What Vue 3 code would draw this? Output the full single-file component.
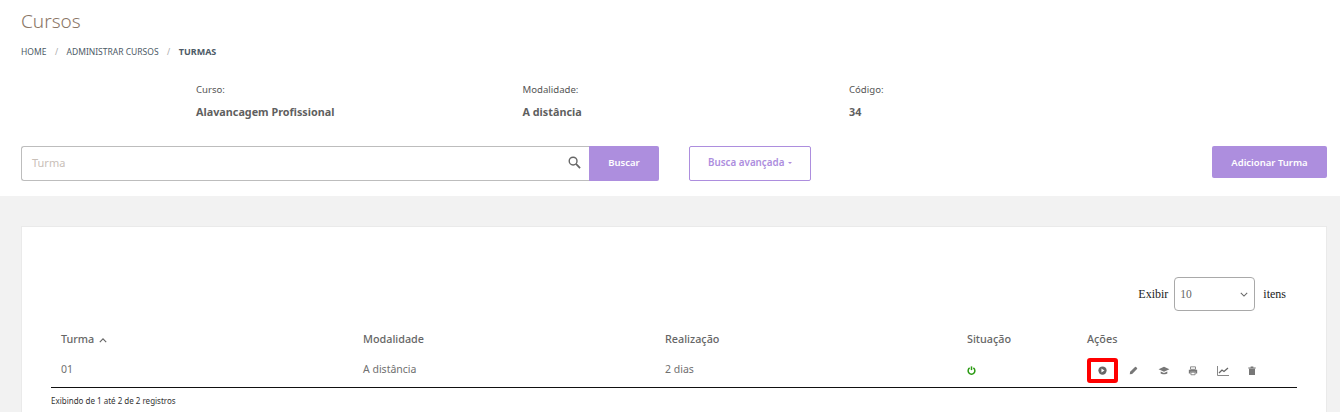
<script setup>
const infos = [
  { label: 'Curso:', value: 'Alavancagem Profissional' },
  { label: 'Modalidade:', value: 'A distância' },
  { label: 'Código:', value: '34' }
]
</script>

<template>
  <div class="page">
    <header class="top">
      <h1 class="title">Cursos</h1>
      <nav class="crumbs">
        <span>HOME</span><i>/</i><span>ADMINISTRAR CURSOS</span><i>/</i><b>TURMAS</b>
      </nav>
      <div class="infos">
        <div v-for="info in infos" :key="info.label" class="info">
          <div class="label">{{ info.label }}</div>
          <div class="value">{{ info.value }}</div>
        </div>
      </div>
      <div class="toolbar">
        <div class="search">
          <span class="placeholder">Turma</span>
          <svg class="lens" viewBox="0 0 14 14" width="13" height="13"><circle cx="5.5" cy="5.5" r="4.2" fill="none" stroke="#666" stroke-width="1.5"/><path d="M8.6 8.6 13 13" stroke="#666" stroke-width="1.9" fill="none"/></svg>
        </div>
        <button class="btn solid search-btn">Buscar</button>
        <button class="btn outline">Busca avançada <span class="caret"></span></button>
        <button class="btn solid add">Adicionar Turma</button>
      </div>
    </header>

    <main class="body">
      <section class="card">
        <div class="show">
          <span>Exibir</span>
          <div class="select"><span>10</span>
            <svg viewBox="0 0 10 6" width="8" height="5"><path d="M1 1l4 4 4-4" fill="none" stroke="#666" stroke-width="1.3"/></svg>
          </div>
          <span>itens</span>
        </div>
        <div class="table">
          <div class="row head">
            <div>Turma <svg class="sort" viewBox="0 0 10 6" width="8" height="5"><path d="M1 5l4-4 4 4" fill="none" stroke="#666" stroke-width="1.4"/></svg></div>
            <div>Modalidade</div>
            <div>Realização</div>
            <div>Situação</div>
            <div>Ações</div>
          </div>
          <div class="row data">
            <div class="txt">01</div>
            <div class="txt">A distância</div>
            <div class="txt">2 dias</div>
            <div>
              <svg class="power" viewBox="0 0 12 12" width="9" height="9"><path d="M3.5 2.6a4.5 4.5 0 1 0 5 0" fill="none" stroke="#2a9a12" stroke-width="2"/><path d="M6 .5v5" stroke="#2a9a12" stroke-width="2"/></svg>
            </div>
            <div class="actions">
              <span class="act play">
                <svg viewBox="0 0 12 12" width="9" height="9"><circle cx="6" cy="6" r="5.5" fill="#666"/><path d="M4.600 3.400 8.600 6l-4 2.600z" fill="#fff"/></svg>
              </span>
              <span class="act pencil">
                <svg viewBox="0 0 12 12" width="9" height="9"><path d="M1 11l.5-3.200L8 1.300a1 1 0 0 1 1.400 0l1.300 1.300a1 1 0 0 1 0 1.400L4.200 10.500z" fill="#777"/></svg>
              </span>
              <span class="act grad">
                <svg viewBox="0 0 14 12" width="12" height="10"><path d="M7 1 .5 4 7 7l6.500-3z" fill="#777"/><path d="M3 6.500v2.600C4 10.300 10 10.300 11 9.100V6.500L7 8.400z" fill="#777"/></svg>
              </span>
              <span class="act printer">
                <svg viewBox="0 0 12 12" width="10" height="10"><path d="M3 1h6v3H3z" fill="none" stroke="#777"/><path d="M1 4.500h10v4.500H9V7H3v2H1z" fill="#777"/><path d="M3.500 7.500h5v3h-5z" fill="none" stroke="#777"/></svg>
              </span>
              <span class="act chart">
                <svg viewBox="0 0 12 10" width="12" height="10"><path d="M.5 0v9.500H12" fill="none" stroke="#888"/><path d="M2 7l3-3 2 1.500L11 2" fill="none" stroke="#666" stroke-width="1.300"/></svg>
              </span>
              <span class="act trash">
                <svg viewBox="0 0 10 12" width="8" height="9"><path d="M0 2h10v1.200H0zM3.200.5h3.600V2H3.200z" fill="#777"/><path d="M1 3.500h8V12H1z" fill="#777"/></svg>
              </span>
            </div>
          </div>
        </div>
        <div class="footer">Exibindo de 1 até 2 de 2 registros</div>
      </section>
    </main>
  </div>
</template>

<style>
html, body { margin: 0; background: #fff; overflow: hidden; }
</style>

<style scoped>
.page { width: 1340px; height: 412px; overflow: hidden; font-family: "Noto Sans", sans-serif; color: #555; }
.top { height: 196px; box-sizing: border-box; padding: 10px 13px 0 21px; background: #fff; }
.title { margin: 0; font-size: 19px; font-weight: 300; line-height: 22px; color: #8a7565; }
.crumbs { margin-top: 14px; display: flex; align-items: center; font-size: 8.500px; line-height: 12px; color: #4d5a66; }
.crumbs i { font-style: normal; color: #aaa; margin: 0 8.500px; }
.crumbs b { font-weight: 700; font-size: 9px; }
.infos { display: flex; margin: 25px 0 0 175px; }
.info { width: 326.500px; font-size: 9.600px; color: #555; }
.label { line-height: 14px; }
.value { margin-top: 7px; font-size: 10.800px; line-height: 16px; font-weight: 700; color: #5f5f5f; }
.toolbar { display: flex; align-items: flex-start; margin-top: 26px; }
.search { width: 568px; height: 35px; box-sizing: border-box; border: 1px solid #bdbdbd; border-right: 0; border-radius: 3px 0 0 3px; display: flex; align-items: center; justify-content: space-between; padding: 0 8px 0 10px; }
.placeholder { font-size: 11px; color: #c9c0b8; padding-bottom: 3px; }
.lens { margin-top: -3px; }
.btn { font-family: inherit; font-size: 9.500px; font-weight: 600; border-radius: 2px; height: 35px; box-sizing: border-box; padding: 0 0 3px; cursor: pointer; }
.solid { background: #ad8ede; color: #fff; border: 0; }
.search-btn { width: 70px; border-radius: 0 2px 2px 0; }
.outline { width: 122px; margin-left: 30px; background: #fff; color: #ad8ede; border: 1px solid #ad8ede; font-size: 9.800px; }
.caret { display: inline-block; width: 0; height: 0; border: 2px solid transparent; border-top-color: #ad8ede; border-bottom: 0; vertical-align: middle; margin-left: 1px; }
.add { width: 115px; height: 32px; margin-left: auto; padding: 0; }
.body { background: #f2f2f2; height: 216px; padding: 30px 13px 0 21px; box-sizing: border-box; }
.card { background: #fff; height: 186px; box-sizing: border-box; border: 1px solid #eaeaea; border-bottom: 0; padding: 50px 29px 0 29px; position: relative; }
.show { display: flex; align-items: center; justify-content: flex-end; padding-right: 11px; font-family: "Liberation Serif", serif; font-size: 12px; color: #222; height: 34px; }
.select { width: 81px; height: 34px; box-sizing: border-box; border: 1px solid #a9a9a9; border-radius: 4px; margin: 0 8px 0 6px; display: flex; align-items: center; justify-content: space-between; padding: 0 6px 0 5px; font-size: 11.500px; color: #666; }
.table { margin-top: 15px; border-bottom: 1px solid #111; }
.row { display: grid; grid-template-columns: 302px 302px 302px 120px 1fr; padding-left: 10px; }
.head { height: 28px; box-sizing: border-box; padding-bottom: 4px; align-items: center; font-size: 10.800px; font-weight: 500; color: #666; }
.sort { margin-left: 2px; vertical-align: 0; }
.data { height: 33px; align-items: center; font-size: 10.500px; color: #707070; }
.txt { padding-bottom: 4px; }
.actions { display: flex; align-items: center; position: relative; }
.act { display: flex; justify-content: center; align-items: center; height: 16px; }
.play { box-sizing: border-box; width: 31px; height: 25px; border: 4px solid #f00; border-radius: 3px; }
.pencil { width: 30px; }
.grad { width: 30px; margin-left: 1px; }
.printer { width: 28px; }
.chart { width: 30px; margin-left: 1px; }
.trash { width: 28px; }
.power { display: block; }
.footer { margin-top: 7px; font-size: 8px; line-height: 12px; color: #333; }
</style>
